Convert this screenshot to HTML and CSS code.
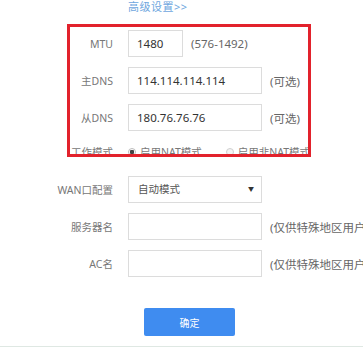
FILE: index.html
```html
<!DOCTYPE html>
<html lang="zh-CN">
<head>
  <meta charset="UTF-8">
  <meta name="viewport" content="width=device-width, initial-scale=1.0">
  <title>高级设置</title>
  <link rel="stylesheet" href="styles.css">
</head>
<body>
  <a class="adv-link" href="#">高级设置&gt;&gt;</a>

  <div class="mark-box">
    <div class="row">
      <span class="row-label">MTU</span>
      <div class="field field-short">1480</div>
      <span class="hint">(576-1492)</span>
    </div>
    <div class="row">
      <span class="row-label">主DNS</span>
      <div class="field">114.114.114.114</div>
      <span class="hint">(可选)</span>
    </div>
    <div class="row">
      <span class="row-label">从DNS</span>
      <div class="field">180.76.76.76</div>
      <span class="hint">(可选)</span>
    </div>
    <div class="row row-radio">
      <span class="row-label">工作模式</span>
      <label class="radio"><span class="dot checked"></span>启用NAT模式</label>
      <label class="radio"><span class="dot"></span>启用非NAT模式</label>
    </div>
  </div>

  <div class="rows">
    <div class="row">
      <span class="row-label">WAN口配置</span>
      <div class="field field-select"><span>自动模式</span><span class="caret">▼</span></div>
    </div>
    <div class="row">
      <span class="row-label">服务器名</span>
      <div class="field"></div>
      <span class="hint">(仅供特殊地区用户使用)</span>
    </div>
    <div class="row">
      <span class="row-label">AC名</span>
      <div class="field"></div>
      <span class="hint">(仅供特殊地区用户使用)</span>
    </div>
  </div>

  <button class="ok-btn">确定</button>
  <div class="footer-line"></div>
</body>
</html>
```

FILE: styles.css
```css
body {
  margin: 0;
  width: 363px;
  height: 349px;
  overflow: hidden;
  background: #ffffff;
  font-family: "Noto Sans", "Noto Sans CJK SC", sans-serif;
  color: #666666;
}
.adv-link {
  display: block;
  padding-left: 128px;
  font-size: 11px;
  line-height: 13px;
  letter-spacing: 0.5px;
  color: #6ea6de;
  text-decoration: none;
}
.mark-box {
  --lw: 43px;
  margin: 11px 0 0 67px;
  width: 238px;
  height: 124px;
  padding-top: 3px;
  box-sizing: content-box;
  border: 3px solid #e2222c;
  overflow: hidden;
  display: flex;
  flex-direction: column;
  gap: 10px;
}
.mark-box .row {
  flex-shrink: 0;
}
.rows {
  --lw: 113px;
  margin-top: 19px;
  display: flex;
  flex-direction: column;
  gap: 10px;
}
.row {
  display: flex;
  align-items: center;
  height: 27px;
  white-space: nowrap;
}
.row-label {
  width: var(--lw);
  margin-right: 15px;
  text-align: right;
  font-size: 10.5px;
  color: #777777;
  flex-shrink: 0;
}
.field {
  width: 134px;
  height: 27px;
  box-sizing: border-box;
  border: 1px solid #dcdcdc;
  padding-left: 8px;
  font-size: 11.5px;
  line-height: 25px;
  color: #333333;
  flex-shrink: 0;
}
.field-short {
  width: 55px;
}
.field-select {
  display: flex;
  justify-content: space-between;
  padding: 0 7px 0 9px;
  font-size: 10.5px;
  color: #555555;
}
.caret {
  font-size: 6px;
  color: #333333;
}
.hint {
  margin-left: 8px;
  font-size: 11.5px;
  color: #666666;
}
.row-radio {
  align-items: flex-start;
  line-height: 22px;
}
.radio {
  display: flex;
  align-items: center;
  font-size: 10.5px;
  color: #777777;
  margin-right: 24px;
}
.dot {
  width: 8px;
  height: 8px;
  margin: 0 4px 0 0;
  border: 1px solid #cfcfcf;
  border-radius: 50%;
  box-sizing: border-box;
  background: #f4f4f4;
}
.dot.checked {
  border-color: #bbbbbb;
  background: radial-gradient(circle, #444444 0 2px, #ffffff 2.5px);
}
.ok-btn {
  display: block;
  margin: 31px 0 0 144px;
  width: 91px;
  height: 28px;
  border: none;
  border-radius: 2px;
  background: #3f8cf0;
  color: #ffffff;
  font-family: "Noto Sans CJK SC", sans-serif;
  font-size: 10px;
  cursor: pointer;
}
.footer-line {
  margin-top: 10px;
  height: 1px;
  background: #dfe8e3;
}
```
